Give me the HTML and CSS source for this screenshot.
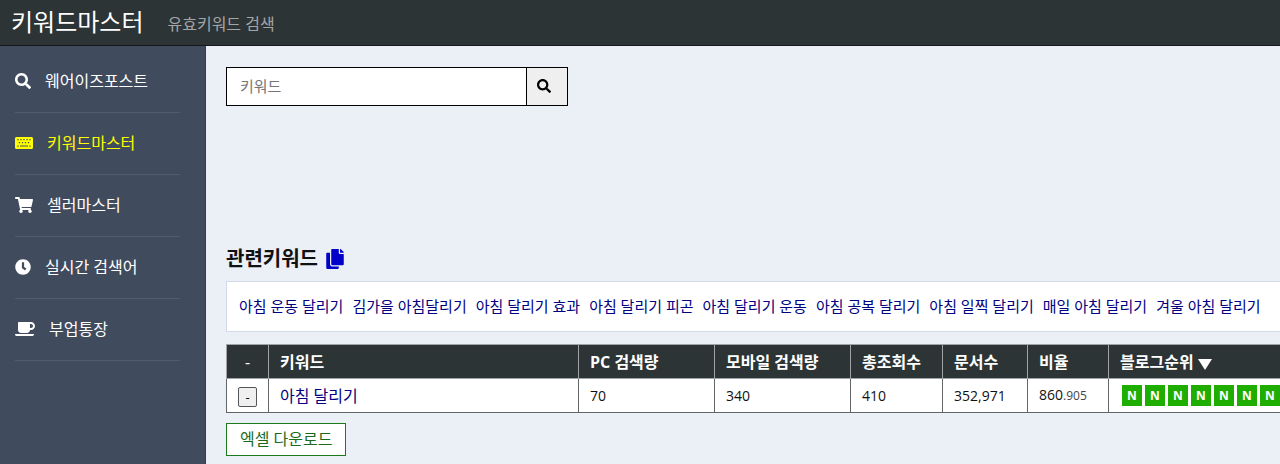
FILE: index.html
```html
<!DOCTYPE html>
<html lang="ko">
<head>
    <meta charset="UTF-8">
    <meta name="viewport" content="width=device-width, initial-scale=1.0">
    <title>키워드마스터</title>
    <link rel="stylesheet" href="styles.css">
</head>

<body>
    <header class="header">
        <h1>키워드마스터</h1>
        <span class="tagline">유효키워드 검색</span>
    </header>

    <div class="container">
        <!-- 왼쪽 메뉴 -->
        <nav class="sidebar">
            <a href="#" class="menu">
                <svg width="16" height="16" viewBox="0 0 512 512"><path d="M505 442.700L405.300 343c-4.500-4.500-10.600-7-17-7H372c27.600-35.300 44-79.700 44-128C416 93.100 322.900 0 208 0S0 93.100 0 208s93.100 208 208 208c48.300 0 92.700-16.400 128-44v16.300c0 6.400 2.500 12.500 7 17l99.700 99.700c9.400 9.400 24.600 9.400 33.900 0l28.300-28.300c9.400-9.400 9.400-24.600.1-34zM208 336c-70.700 0-128-57.200-128-128 0-70.700 57.200-128 128-128 70.700 0 128 57.200 128 128 0 70.700-57.200 128-128 128z"/></svg>
                <span>웨어이즈포스트</span>
            </a>
            <a href="#" class="menu active">
                <svg width="18" height="16" viewBox="0 0 576 512"><path fill-rule="evenodd" d="M528 448H48c-26.500 0-48-21.500-48-48V112c0-26.500 21.500-48 48-48h480c26.500 0 48 21.500 48 48v288c0 26.500-21.500 48-48 48zM76 128h40v40H76zM172 128h40v40h-40zM268 128h40v40h-40zM364 128h40v40h-40zM460 128h40v40h-40zM124 224h40v40h-40zM220 224h40v40h-40zM316 224h40v40h-40zM412 224h40v40h-40zM76 332h40v40H76zM160 336h256v32H160zM460 332h40v40h-40z"/></svg>
                <span>키워드마스터</span>
            </a>
            <a href="#" class="menu">
                <svg width="18" height="16" viewBox="0 0 576 512"><path d="M528.100 301.300l47.300-208C578.800 78.300 567.400 64 552 64H159.200l-9.200-44.800C147.800 8 137.900 0 126.500 0H24C10.700 0 0 10.700 0 24v16c0 13.300 10.700 24 24 24h69.900l70.200 343.400C147.300 417.100 136 435.200 136 456c0 30.900 25.100 56 56 56s56-25.100 56-56c0-15.700-6.400-29.800-16.800-40h209.600C430.400 426.200 424 440.300 424 456c0 30.900 25.100 56 56 56s56-25.100 56-56c0-22.200-12.900-41.300-31.600-50.400l5.500-24.300c3.400-15-8-29.300-23.400-29.300H218.100l-6.500-32h293.100c11.200 0 20.900-7.800 23.400-18.700z"/></svg>
                <span>셀러마스터</span>
            </a>
            <a href="#" class="menu">
                <svg width="16" height="16" viewBox="0 0 512 512"><path d="M256 8C119 8 8 119 8 256s111 248 248 248 248-111 248-248S393 8 256 8zm57.100 350.100L224.900 294c-3.100-2.300-4.900-5.900-4.900-9.700V116c0-6.600 5.400-12 12-12h48c6.600 0 12 5.400 12 12v137.700l63.500 46.200c5.400 3.900 6.500 11.400 2.600 16.800l-28.200 38.800c-3.900 5.300-11.400 6.500-16.800 2.600z"/></svg>
                <span>실시간 검색어</span>
            </a>
            <a href="#" class="menu">
                <svg width="20" height="16" viewBox="0 0 640 512"><path d="M192 384h192c53 0 96-43 96-96h32c70.600 0 128-57.400 128-128S582.600 32 512 32H120c-13.300 0-24 10.700-24 24v232c0 53 43 96 96 96zM512 96c35.300 0 64 28.700 64 64s-28.700 64-64 64h-32V96h32zm47.700 384H48.300c-47.600 0-61-64-36-64h583.300c25 0 11.800 64-35.900 64z"/></svg>
                <span>부업통장</span>
            </a>
        </nav>

        <main class="main">
            <form class="search">
                <input type="text" placeholder="키워드" aria-label="키워드">
                <button type="submit" aria-label="검색">
                    <svg width="14" height="14" viewBox="0 0 512 512"><path d="M505 442.700L405.300 343c-4.500-4.500-10.600-7-17-7H372c27.600-35.300 44-79.700 44-128C416 93.100 322.900 0 208 0S0 93.100 0 208s93.100 208 208 208c48.300 0 92.700-16.400 128-44v16.300c0 6.400 2.500 12.500 7 17l99.700 99.700c9.400 9.400 24.600 9.400 33.900 0l28.300-28.300c9.400-9.400 9.400-24.600.1-34zM208 336c-70.700 0-128-57.200-128-128 0-70.700 57.200-128 128-128 70.700 0 128 57.200 128 128 0 70.700-57.200 128-128 128z"/></svg>
                </button>
            </form>

            <div class="banner"></div>

            <h2>
                관련키워드
                <svg width="18" height="20" viewBox="0 0 448 512"><path d="M320 448v40c0 13.300-10.700 24-24 24H24c-13.300 0-24-10.700-24-24V120c0-13.300 10.700-24 24-24h72v296c0 30.900 25.100 56 56 56h168zm0-344V0H152c-13.300 0-24 10.700-24 24v368c0 13.300 10.700 24 24 24h272c13.300 0 24-10.700 24-24V128H344c-13.200 0-24-10.800-24-24zm121-31L375 7A24 24 0 0 0 358.100 0H352v96h96v-6.100a24 24 0 0 0-7-16.900z"/></svg>
            </h2>

            <div class="related">
                <a href="#">아침 운동 달리기</a>
                <a href="#">김가을 아침달리기</a>
                <a href="#">아침 달리기 효과</a>
                <a href="#">아침 달리기 피곤</a>
                <a href="#">아침 달리기 운동</a>
                <a href="#">아침 공복 달리기</a>
                <a href="#">아침 일찍 달리기</a>
                <a href="#">매일 아침 달리기</a>
                <a href="#">겨울 아침 달리기</a>
            </div>

            <table class="result">
                <colgroup>
                    <col class="col-del">
                    <col class="col-keyword">
                    <col class="col-search">
                    <col class="col-search">
                    <col class="col-total">
                    <col class="col-docs">
                    <col class="col-ratio">
                    <col class="col-rank">
                </colgroup>
                <thead>
                    <tr>
                        <th class="del">-</th>
                        <th>키워드</th>
                        <th>PC 검색량</th>
                        <th>모바일 검색량</th>
                        <th>총조회수</th>
                        <th>문서수</th>
                        <th>비율</th>
                        <th>블로그순위 <svg width="14" height="11" viewBox="0 0 14 11"><path d="M0 0h14L7 11z"/></svg></th>
                    </tr>
                </thead>
                <tbody>
                    <tr>
                        <td class="del"><button type="button" class="btn-del">-</button></td>
                        <td class="keyword"><a href="#">아침 달리기</a></td>
                        <td>70</td>
                        <td>340</td>
                        <td>410</td>
                        <td>352,971</td>
                        <td>860<small>.905</small></td>
                        <td>
                            <div class="ranks">
                                <a href="#">N</a>
                                <a href="#">N</a>
                                <a href="#">N</a>
                                <a href="#">N</a>
                                <a href="#">N</a>
                                <a href="#">N</a>
                                <a href="#">N</a>
                            </div>
                        </td>
                    </tr>
                </tbody>
            </table>

            <button type="button" class="btn-excel">엑셀 다운로드</button>
        </main>
    </div>
</body>
</html>
```
FILE: styles.css
```css
* {
    box-sizing: border-box;
}

body {
    margin: 0;
    min-height: 100vh;
    display: flex;
    flex-direction: column;
    overflow-x: hidden;
    background: #ebeff6;
    color: #111;
    font-family: "Open Sans", "Noto Sans CJK KR", sans-serif;
    font-size: 16px;
    line-height: 24px;
}

a {
    color: #000080;
    text-decoration: none;
}

svg {
    fill: currentColor;
    flex-shrink: 0;
}

input,
button {
    font-family: inherit;
    border-radius: 0;
}

.header {
    display: flex;
    align-items: center;
    gap: 24px;
    height: 46px;
    padding: 0 11px 2px;
    background: #2d3436;
    border-bottom: 1px solid #15191b;
}

.header h1 {
    margin: 0;
    font-size: 24px;
    font-weight: normal;
    color: #fff;
}

.tagline {
    padding-top: 4px;
    color: #a3a6a8;
}

.container {
    display: flex;
    flex: 1;
}

.sidebar {
    flex: 0 0 206px;
    padding: 5px 25px 0 15px;
    background: #414b5e;
    border-right: 1px solid #363f50;
}

.menu {
    display: flex;
    align-items: center;
    gap: 14px;
    height: 62px;
    padding-bottom: 1px;
    border-bottom: 1px solid #535c6c;
    color: #fff;
}

.menu.active {
    color: #ff0;
}

.main {
    flex: 1 0 auto;
    padding: 21px 20px 9px;
}

.search {
    display: flex;
}

.search input {
    width: 301px;
    height: 39px;
    padding: 0 13px 2px;
    border: 1px solid #000;
    background: #fff;
    font-size: 15px;
}

.search input::placeholder {
    color: #757575;
}

.search button {
    width: 42px;
    margin-left: -1px;
    padding: 0 7px 4px 0;
    border: 1px solid #000;
    background: #efefef;
    color: #000;
}

.search svg {
    vertical-align: middle;
}

.banner {
    height: 140px;
}

h2 {
    display: flex;
    align-items: center;
    gap: 8px;
    margin: 0 0 9px;
    font-size: 20px;
    line-height: 26px;
}

h2 svg {
    color: #0000c8;
}

.related {
    display: flex;
    gap: 9px;
    padding: 12px 12px 13px;
    margin-bottom: 12px;
    background: #fff;
    border: 1px solid #d3d9e6;
    font-size: 15px;
    white-space: nowrap;
}

.result {
    border-collapse: collapse;
    background: #fff;
    white-space: nowrap;
}

.col-del { width: 42px; }
.col-keyword { width: 310px; }
.col-search { width: 136px; }
.col-total { width: 92px; }
.col-docs { width: 85px; }
.col-ratio { width: 81px; }
.col-rank { width: 192px; }

.result th,
.result td {
    height: 34px;
    padding: 0 11px;
    border: 1px solid #636668;
    text-align: left;
}

.result th {
    background: #2d3436;
    border-color: #a0a4a6;
    color: #fff;
}

.result th svg {
    vertical-align: -2px;
}

.result td {
    font-size: 14px;
}

.result .keyword {
    font-size: 16px;
}

.result .del {
    padding: 0;
    font-weight: normal;
    text-align: center;
}

.result small {
    font-size: 12px;
    color: #444;
}

.btn-del {
    width: 19px;
    height: 20px;
    padding: 0;
    border: 1px solid #555;
    border-radius: 2px;
    background: #efefef;
    font-size: 13px;
    line-height: 16px;
    vertical-align: middle;
}

.ranks {
    display: flex;
    gap: 3px;
    padding-left: 2px;
}

.ranks a {
    width: 20px;
    height: 21px;
    background: #1fae00;
    color: #fff;
    font-size: 12px;
    font-weight: bold;
    line-height: 21px;
    text-align: center;
}

.btn-excel {
    margin-top: 10px;
    height: 33px;
    padding: 0 13px 3px;
    border: 1px solid #1c7a1c;
    background: #fff;
    color: #1c6b1c;
    font-size: 16px;
}
```
